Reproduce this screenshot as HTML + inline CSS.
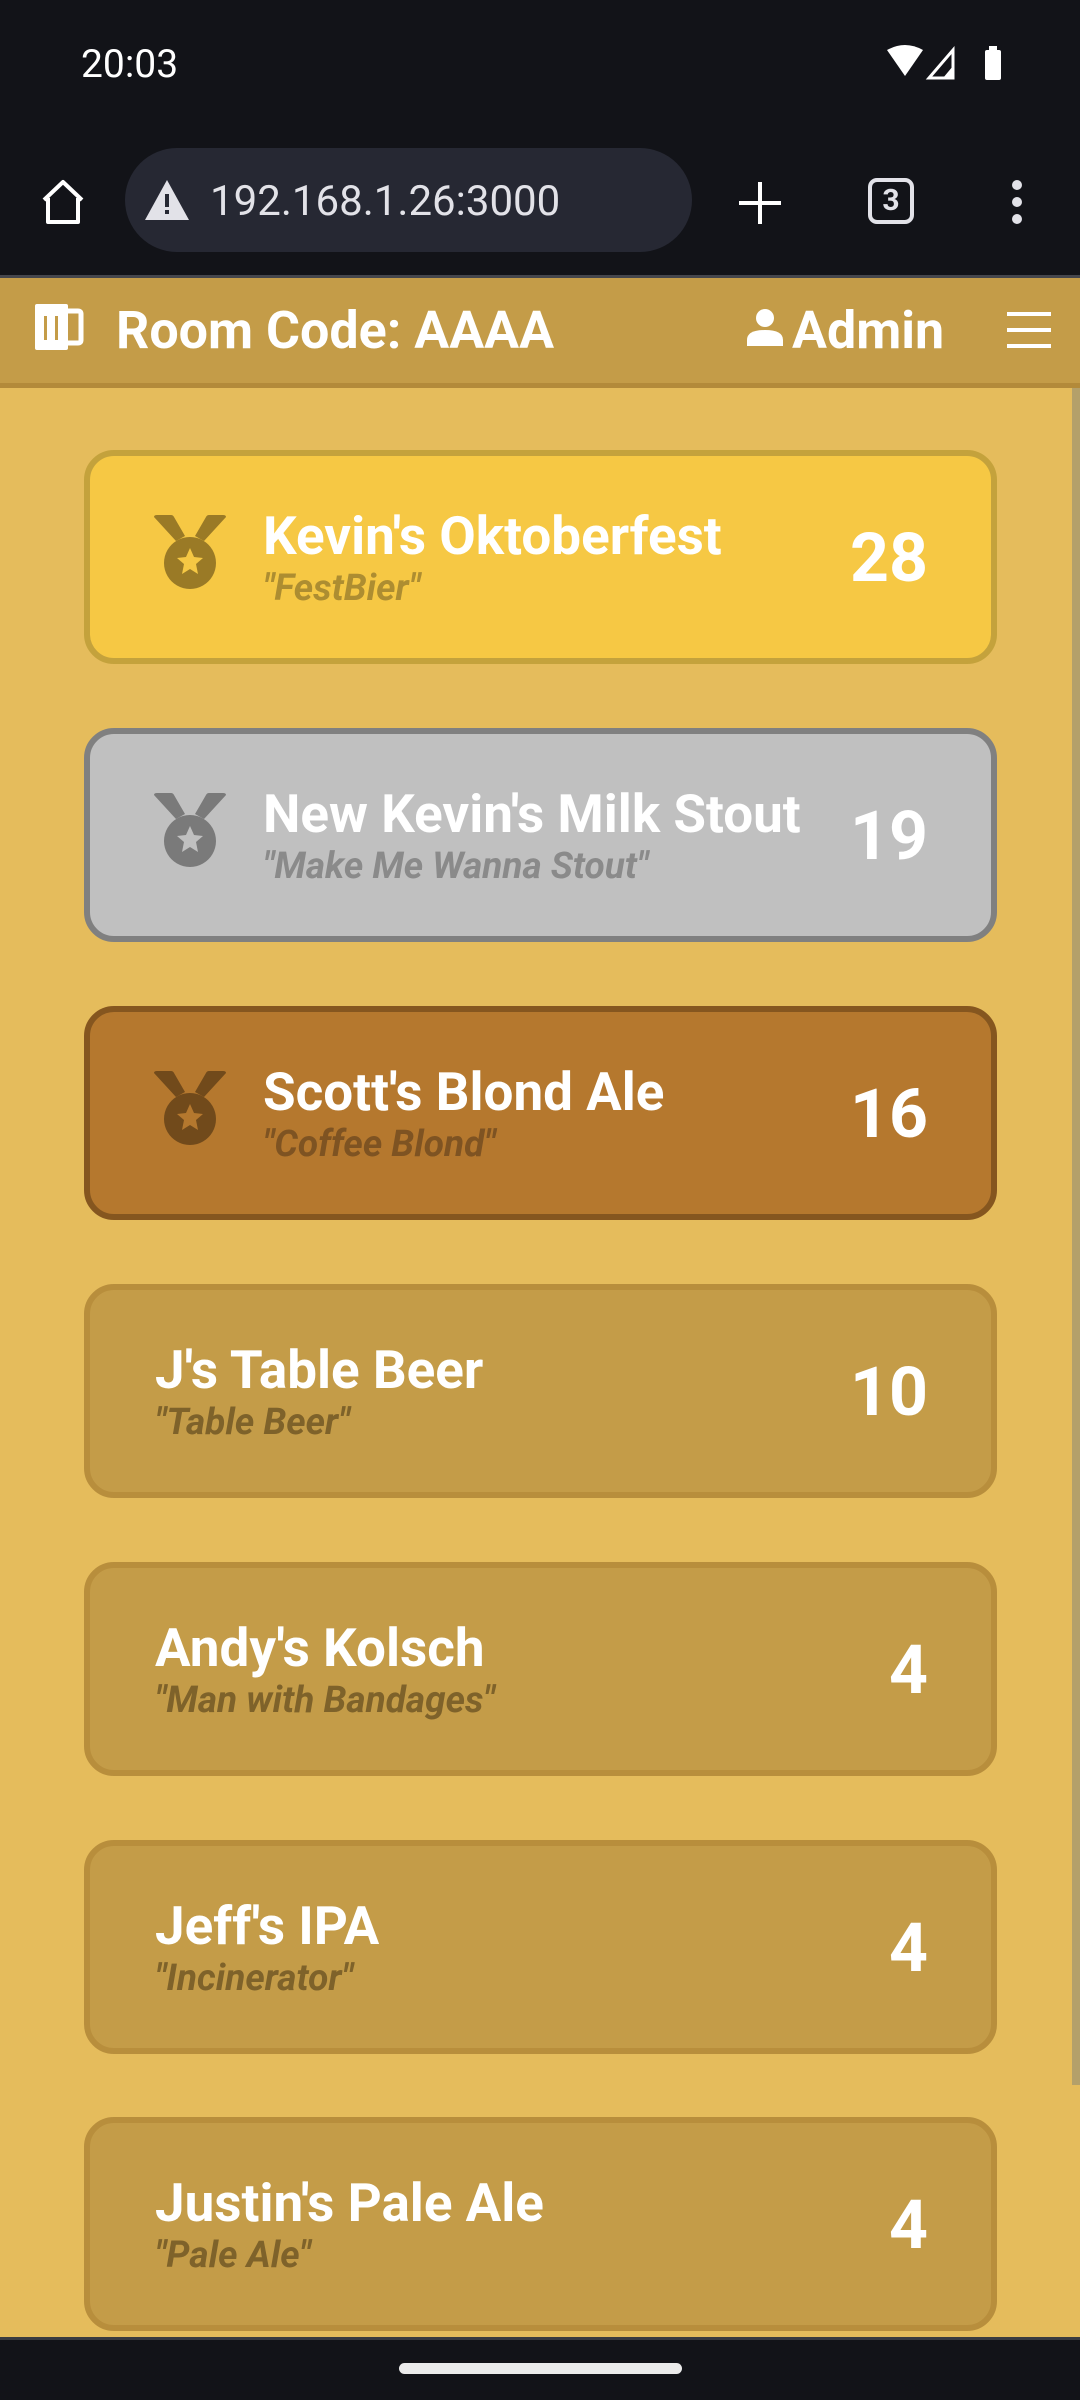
<!DOCTYPE html>
<html><head><meta charset="utf-8"><style>
*{margin:0;padding:0;box-sizing:border-box}
body{width:1080px;height:2400px;position:relative;overflow:hidden;background:#e5bc5c;font-family:"Roboto","Liberation Sans",sans-serif}
.abs{position:absolute}
.status{left:0;top:0;width:1080px;height:277px;background:#121318}
.card{position:absolute;left:84px;width:913px;height:214px;border:6px solid #b88e3c;border-radius:30px;background:#c49c48}
.t{position:absolute;color:#fff;font-weight:bold;font-size:53px;white-space:nowrap;top:49px}
.s{position:absolute;font-weight:bold;font-style:italic;font-size:37px;white-space:nowrap;top:111px;color:#7e622a}
.sc{position:absolute;right:63px;top:62px;color:#fff;font-weight:bold;font-size:68px}
.m{position:absolute;left:50px;top:49px;width:100px;height:100px}
</style></head><body>
<div class="abs status"></div>
<div class="abs" style="left:81px;top:41px;color:#fff;font-size:39px">20:03</div>
<svg class="abs" style="left:885px;top:44px" width="125" height="40" viewBox="0 0 125 40">
<path d="M2,6 Q20,-4 38,6 L20,32 Z" fill="#fff"/>
<path d="M44,34 L68,6 L68,34 Z" fill="none" stroke="#fff" stroke-width="3"/>
<path d="M58,34 L68,22 L68,34 Z" fill="#fff"/>
<rect x="100" y="6" width="16" height="30" rx="2" fill="#fff"/><rect x="104" y="2" width="8" height="5" fill="#fff"/>
</svg>
<svg class="abs" style="left:38px;top:178px" width="50" height="50" viewBox="0 0 50 50">
<path d="M6,22 L25,4 L44,22 M10,20 V44 H40 V20" fill="none" stroke="#fff" stroke-width="4" stroke-linejoin="round"/>
</svg>
<div class="abs" style="left:125px;top:148px;width:567px;height:104px;border-radius:52px;background:#262833"></div>
<svg class="abs" style="left:143px;top:178px" width="48" height="44" viewBox="0 0 48 44">
<path d="M24,2 L46,42 H2 Z" fill="#e2e2e8"/><rect x="22" y="16" width="4" height="13" fill="#262833"/><rect x="22" y="32" width="4" height="4" fill="#262833"/>
</svg>
<div class="abs" style="left:210px;top:177px;color:#e2e2e8;font-size:42px">192.168.1.26:3000</div>
<svg class="abs" style="left:735px;top:178px" width="50" height="50"><path d="M25,4 V46 M4,25 H46" stroke="#fff" stroke-width="4"/></svg>
<div class="abs" style="left:868px;top:178px;width:46px;height:46px;border:4px solid #e2e2e8;border-radius:9px;color:#e2e2e8;font-size:30px;font-weight:bold;text-align:center;line-height:38px">3</div>
<svg class="abs" style="left:1006px;top:178px" width="22" height="50"><circle cx="11" cy="7" r="5" fill="#e2e2e8"/><circle cx="11" cy="24" r="5" fill="#e2e2e8"/><circle cx="11" cy="41" r="5" fill="#e2e2e8"/></svg>
<div class="abs" style="left:0;top:275px;width:1080px;height:3px;background:#45464c"></div>
<div class="abs" style="left:0;top:278px;width:1080px;height:105px;background:#c49c48"></div>
<div class="abs" style="left:0;top:383px;width:1080px;height:5px;background:#b38a3a"></div>
<svg class="abs" style="left:34px;top:303px" width="50" height="50" viewBox="34 303 50 50">
<rect x="35" y="304" width="33" height="46" rx="2" fill="#fff"/>
<path d="M68,311 H78 Q81,311 81,314 V340 Q81,343 78,343 H68" fill="none" stroke="#fff" stroke-width="5"/>
<rect x="44" y="316" width="3" height="24" fill="#c49c48"/><rect x="55" y="316" width="3" height="24" fill="#c49c48"/>
</svg>
<div class="abs" style="left:116px;top:300px;color:#fff;font-weight:bold;font-size:52px">Room Code: AAAA</div>
<svg class="abs" style="left:746px;top:308px" width="38" height="40" viewBox="0 0 38 40"><circle cx="19" cy="10" r="9" fill="#fff"/><path d="M1,38 V32 Q1,22 19,22 Q37,22 37,32 V38 Z" fill="#fff"/></svg>
<div class="abs" style="left:792px;top:300px;color:#fff;font-weight:bold;font-size:52px">Admin</div>
<svg class="abs" style="left:1005px;top:310px" width="48" height="40"><path d="M2,4 H46 M2,20 H46 M2,36 H46" stroke="#fff" stroke-width="4"/></svg>
<div class="abs" style="left:1072px;top:388px;width:8px;height:1697px;background:#b4a06a"></div>

<svg width="0" height="0" style="position:absolute"><defs><g id="med">
<path d="M14,12 Q14,10 17,10 H31 Q33,10 34,12 L45,31 L36,36 Z"/><path d="M86,12 Q86,10 83,10 H69 Q67,10 66,12 L55,31 L64,36 Z"/>
<path fill-rule="evenodd" d="M50,32 A26,26 0 1 1 49.99,32 Z M50,43 L54,52 L63,53 L56,59 L58,69 L50,64 L42,69 L44,59 L37,53 L46,52 Z"/>
</g></defs></svg>

<div class="card" style="top:450px;background:#f6c844;border-color:#c4a23c"><svg class="m" viewBox="0 0 100 100" fill="#9a7a26"><use href="#med"/></svg><div class="t" style="left:173px">Kevin's Oktoberfest</div><div class="s" style="left:173px;color:#ad8d31">"FestBier"</div><div class="sc">28</div></div>
<div class="card" style="top:728px;background:#c0c0c0;border-color:#808080"><svg class="m" viewBox="0 0 100 100" fill="#7a7a7a"><use href="#med"/></svg><div class="t" style="left:173px">New Kevin's Milk Stout</div><div class="s" style="left:173px;color:#8a8a8a">"Make Me Wanna Stout"</div><div class="sc">19</div></div>
<div class="card" style="top:1006px;background:#b5782e;border-color:#85561f"><svg class="m" viewBox="0 0 100 100" fill="#714a1b"><use href="#med"/></svg><div class="t" style="left:173px">Scott's Blond Ale</div><div class="s" style="left:173px;color:#7e5322">"Coffee Blond"</div><div class="sc">16</div></div>
<div class="card" style="top:1284px"><div class="t" style="left:65px">J's Table Beer</div><div class="s" style="left:65px">"Table Beer"</div><div class="sc">10</div></div>
<div class="card" style="top:1562px"><div class="t" style="left:65px">Andy's Kolsch</div><div class="s" style="left:65px">"Man with Bandages"</div><div class="sc">4</div></div>
<div class="card" style="top:1840px"><div class="t" style="left:65px">Jeff's IPA</div><div class="s" style="left:65px">"Incinerator"</div><div class="sc">4</div></div>
<div class="card" style="top:2117px"><div class="t" style="left:65px">Justin's Pale Ale</div><div class="s" style="left:65px">"Pale Ale"</div><div class="sc">4</div></div>

<div class="abs" style="left:0;top:2337px;width:1080px;height:3px;background:#3a3b40"></div>
<div class="abs" style="left:0;top:2340px;width:1080px;height:60px;background:#121318"></div>
<div class="abs" style="left:399px;top:2363px;width:283px;height:11px;border-radius:6px;background:#ebebeb"></div>
</body></html>
